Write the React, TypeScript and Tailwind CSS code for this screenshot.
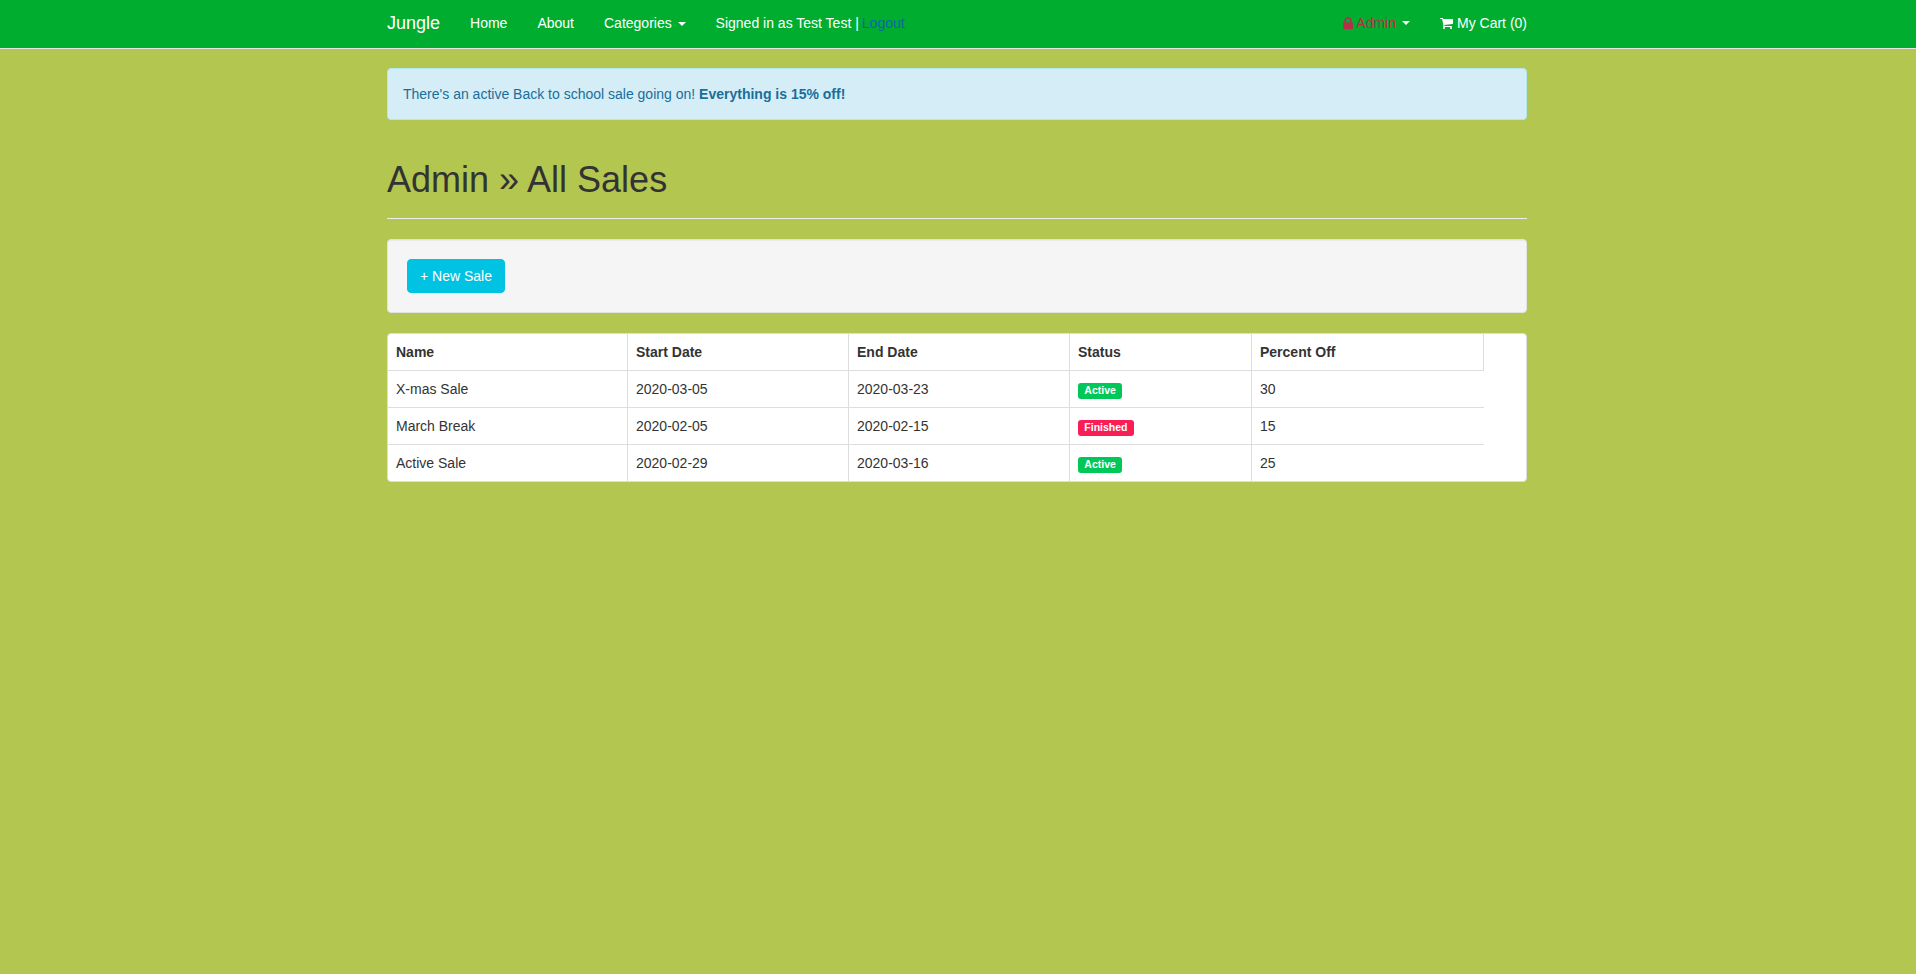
const sales = [
  { name: "X-mas Sale", start: "2020-03-05", end: "2020-03-23", status: "Active", off: 30 },
  { name: "March Break", start: "2020-02-05", end: "2020-02-15", status: "Finished", off: 15 },
  { name: "Active Sale", start: "2020-02-29", end: "2020-03-16", status: "Active", off: 25 },
];

function Caret() {
  return <span className="ml-[2px] inline-block align-middle border-x-4 border-t-4 border-x-transparent border-t-white" />;
}

function LockIcon() {
  return (
    <svg viewBox="320 128 1152 1408" className="mr-[3px] h-3 w-[10px] fill-current">
      <path d="M640 768h512v-192q0-106-75-181t-181-75-181 75-75 181v192zm832 96v576q0 40-28 68t-68 28h-960q-40 0-68-28t-28-68v-576q0-40 28-68t68-28h32v-192q0-184 132-316t316-132 316 132 132 316v192h32q40 0 68 28t28 68z" />
    </svg>
  );
}

function CartIcon() {
  return (
    <svg viewBox="64 256 1664 1408" className="mr-1 h-[11px] w-[13px] fill-current">
      <path d="M704 1536q0 52-38 90t-90 38-90-38-38-90 38-90 90-38 90 38 38 90zm896 0q0 52-38 90t-90 38-90-38-38-90 38-90 90-38 90 38 38 90zm128-1088v512q0 24-16.500 42.500t-40.500 21.500l-1044 122q13 60 13 70 0 16-24 64h920q26 0 45 19t19 45-19 45-45 19h-1024q-26 0-45-19t-19-45q0-11 8-31.500t16-36 21.500-40 15.500-29.500l-177-823h-204q-26 0-45-19t-19-45 19-45 45-19h256q16 0 28.500 6.500t19.500 15.500 13 24.500 8 26 5.500 29.500 4.500 26h1201q26 0 45 19t19 45z" />
    </svg>
  );
}

export default function App() {
  return (
    <div className="min-h-screen bg-[#b3c64f] pr-[2px] font-['Liberation_Sans',Arial,sans-serif] text-sm leading-5 text-[#333333]">
      {/* Navbar */}
      <nav className="-mr-[2px] h-[49px] border-b border-[#e7e7e7] bg-[#00ad2f] pr-[2px] text-white">
        <div className="mx-auto flex h-[46px] w-[1140px] items-center justify-between">
          <div className="flex items-center">
            <a className="mr-[15px] text-lg">Jungle</a>
            <a className="px-[15px]">Home</a>
            <a className="px-[15px]">About</a>
            <a className="px-[15px]">Categories <Caret /></a>
            <span className="pl-[15px]">
              Signed in as Test Test |<a className="ml-[3px] text-[#0a66a8]">Logout</a>
            </span>
          </div>
          <div className="flex items-center">
            <a className="flex items-center px-[15px]">
              <span className="flex items-center text-[#b92c4a]">
                <LockIcon />
                Admin
              </span>
              <span className="ml-1 flex"><Caret /></span>
            </a>
            <a className="ml-[15px] flex items-center">
              <CartIcon />
              My Cart (0)
            </a>
          </div>
        </div>
      </nav>

      <main className="mx-auto w-[1140px] pt-[19px]">
        {/* Alert */}
        <div className="rounded border border-[#b0e8ee] bg-[#d4edf7] px-[15px] py-[15px] text-[#1a6e99]">
          There's an active Back to school sale going on! <strong className="font-bold">Everything is 15% off!</strong>
        </div>

        {/* Page header */}
        <div className="mt-10 mb-5 border-b border-[#eeeeee] pb-[18px]">
          <h1 className="text-4xl leading-[39.6px] font-medium">Admin » All Sales</h1>
        </div>

        {/* Well */}
        <div className="mb-5 rounded border border-[#e3e3e3] bg-[#f5f5f5] p-[19px] shadow-[inset_0_1px_1px_rgba(0,0,0,0.05)]">
          <a className="inline-block h-[34px] w-[98px] rounded border border-[#00c3e3] bg-[#00c3e3] py-1.5 text-center text-white">+ New Sale</a>
        </div>

        {/* Sales table */}
        <div className="overflow-hidden rounded border border-[#dddddd] bg-white">
          <table className="w-[1096px] table-fixed border-separate border-spacing-0 text-left">
            <colgroup>
              <col className="w-[240px]" />
              <col className="w-[221px]" />
              <col className="w-[221px]" />
              <col className="w-[182px]" />
              <col className="w-[232px]" />
            </colgroup>
            <thead>
              <tr>
                <th className="h-[37px] border-r border-b border-[#dddddd] pl-2 font-bold">Name</th>
                <th className="border-r border-b border-[#dddddd] pl-2 font-bold">Start Date</th>
                <th className="border-r border-b border-[#dddddd] pl-2 font-bold">End Date</th>
                <th className="border-r border-b border-[#dddddd] pl-2 font-bold">Status</th>
                <th className="border-r border-b border-[#dddddd] pl-2 font-bold">Percent Off</th>
              </tr>
            </thead>
            <tbody>
              {sales.map((sale, i) => {
                const isLast = i === sales.length - 1;
                const rowLine = isLast ? "" : "border-b border-[#dddddd]";
                return (
                  <tr key={sale.name} className={isLast ? "h-9" : "h-[37px]"}>
                    <td className={`${rowLine} border-r border-[#dddddd] pl-2`}>{sale.name}</td>
                    <td className={`${rowLine} border-r border-[#dddddd] pl-2`}>{sale.start}</td>
                    <td className={`${rowLine} border-r border-[#dddddd] pl-2`}>{sale.end}</td>
                    <td className={`${rowLine} border-r border-[#dddddd] pt-[2px] pl-2`}>
                      <span
                        className={
                          sale.status === "Active"
                            ? "inline-block rounded-[3px] bg-[#00c858] px-[6.3px] pt-[2.1px] pb-[3.15px] align-middle text-[10.5px] leading-[10.5px] font-bold text-white"
                            : "inline-block rounded-[3px] bg-[#f91f56] px-[6.3px] pt-[2.1px] pb-[3.15px] align-middle text-[10.5px] leading-[10.5px] font-bold text-white"
                        }
                      >
                        {sale.status}
                      </span>
                    </td>
                    <td className={`${rowLine} pl-2`}>{sale.off}</td>
                  </tr>
                );
              })}
            </tbody>
          </table>
        </div>
      </main>
    </div>
  );
}
